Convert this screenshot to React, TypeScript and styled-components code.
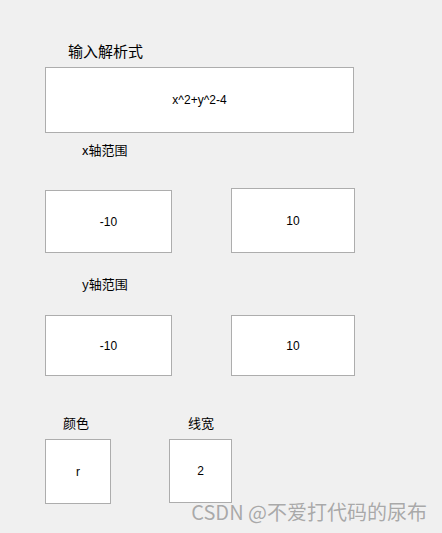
import React from 'react';
import styled, { createGlobalStyle } from 'styled-components';

const GlobalStyle = createGlobalStyle`
  html, body {
    margin: 0;
    padding: 0;
    background: #f0f0f0;
  }
  body {
    font-family: 'Liberation Sans', 'Noto Sans CJK SC', sans-serif;
  }
`;

const App = () => {
  return (
    <Page>
      <GlobalStyle />
      <Label $indent={23} $size={15}>输入解析式</Label>
      <Field $w={309} $h={66} $mt={9}>x^2+y^2-4</Field>

      <Label $indent={37} $mt={10}>x轴范围</Label>
      <Row $mt={32}>
        <Field $w={127} $h={63}>-10</Field>
        <Field $w={124} $h={65}>10</Field>
      </Row>

      <Label $indent={37} $mt={24}>y轴范围</Label>
      <Row $mt={25}>
        <Field $w={127} $h={61}>-10</Field>
        <Field $w={124} $h={61}>10</Field>
      </Row>

      <Options>
        <Option>
          <Label $indent={18}>颜色</Label>
          <Field $w={66} $h={65} $mt={10}>r</Field>
        </Option>
        <Option>
          <Label $indent={19}>线宽</Label>
          <Field $w={63} $h={64} $mt={10}>2</Field>
        </Option>
      </Options>

      <Watermark>CSDN @不爱打代码的尿布</Watermark>
    </Page>
  );
};

const Page = styled.div`
  position: relative;
  width: 442px;
  height: 533px;
  box-sizing: border-box;
  padding: 43px 0 0 45px;
  background: #f0f0f0;
  overflow: hidden;
`;

const Label = styled.div<{ $indent: number; $mt?: number; $size?: number }>`
  margin-left: ${({ $indent }) => $indent}px;
  margin-top: ${({ $mt }) => $mt || 0}px;
  font-family: 'Noto Sans CJK SC', 'Liberation Sans', sans-serif;
  font-size: ${({ $size }) => $size || 13}px;
  line-height: ${({ $size }) => $size || 13}px;
  color: #000;
`;

const Field = styled.div<{ $w: number; $h: number; $mt?: number }>`
  width: ${({ $w }) => $w}px;
  height: ${({ $h }) => $h}px;
  margin-top: ${({ $mt }) => $mt || 0}px;
  box-sizing: border-box;
  border: 1px solid #adadad;
  background: #fff;
  display: flex;
  align-items: center;
  justify-content: center;
  font-family: 'Liberation Sans', Arial, sans-serif;
  font-size: 12px;
  color: #000;
`;

const Row = styled.div<{ $mt: number }>`
  display: flex;
  align-items: flex-end;
  gap: 59px;
  margin-top: ${({ $mt }) => $mt}px;
`;

const Options = styled.div`
  display: flex;
  gap: 58px;
  margin-top: 40px;
`;

const Option = styled.div`
  display: flex;
  flex-direction: column;
`;

const Watermark = styled.div`
  position: absolute;
  right: 15px;
  top: 500px;
  font-family: 'Noto Sans CJK SC', 'Liberation Sans', sans-serif;
  font-size: 20px;
  line-height: 23px;
  color: #a9a9a9;
  text-shadow: 0 0 1px rgba(255, 255, 255, 0.8);
  white-space: nowrap;
`;

export default App;
